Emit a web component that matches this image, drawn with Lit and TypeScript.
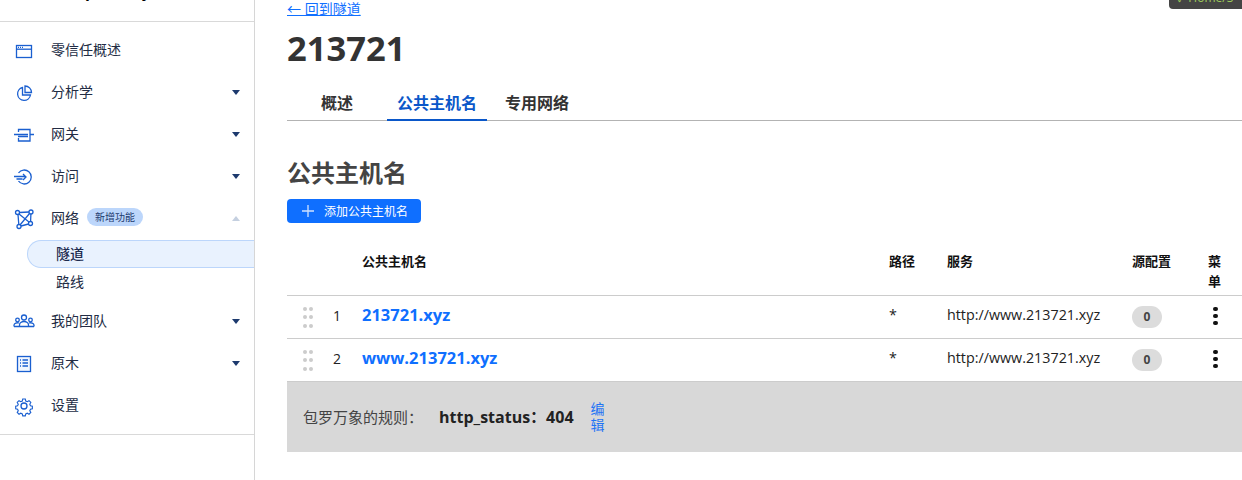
import { LitElement, html, css, svg } from "lit";
import { customElement } from "lit/decorators.js";

const ic = (b: unknown) => html`<svg class="ico" viewBox="0 0 24 24" width="24" height="24" fill="none" stroke="#1a5fd0" stroke-width="1.300">${b}</svg>`;
const icons: Record<string, unknown> = {
  win: ic(svg`<rect x="4.500" y="6.500" width="15" height="12"/><path d="M4.500 10.200h15"/><path d="M6 8.300h1M8 8.300h1M10 8.300h1"/>`),
  pie: ic(svg`<path d="M10.500 6.500a6.500 6.500 0 1 0 8 7.500h-8z"/><path d="M13 5a6.500 6.500 0 0 1 6.500 6.500H13z"/>`),
  gate: ic(svg`<path d="M6.500 9V6.500h11.500v11.500H6.500V15"/><path d="M2 11.500h14M6 13.500h10M18 11.500h4"/>`),
  access: ic(svg`<path d="M6.500 8a7 7 0 1 1 0 8"/><path d="M2 11.500h11M11 9l3 3-3 3M4.500 14h6"/>`),
  net: ic(svg`<circle cx="5.500" cy="5.500" r="2"/><circle cx="19" cy="5" r="2"/><circle cx="7" cy="19.500" r="2"/><circle cx="18.500" cy="16.500" r="2"/><path d="M7.500 5.500l9.500-.5M6 7.500l.8 10M18.900 7l-.3 7.500M9 19l7.600-2M7 7l10 8M17.500 6.500L8 18"/>`),
  team: ic(svg`<circle cx="12" cy="7.500" r="2.500"/><circle cx="5.500" cy="10" r="1.800"/><circle cx="18.500" cy="10" r="1.800"/><path d="M7.500 16.500v-1.500a4.500 3.500 0 0 1 9 0v1.500zM2 16.500v-1.500a3.500 2.500 0 0 1 5-2M22 16.500v-1.500a3.500 2.500 0 0 0-5-2M2 16.500h20"/>`),
  log: ic(svg`<rect x="5.500" y="4.500" width="13" height="15" fill="#f1f6fe"/><path d="M8 8h1M8 11h1M8 14h1M10.500 8h5.500M10.500 11h5.500M10.500 14h5.500"/>`),
  gear: ic(svg`<circle cx="12" cy="12" r="3"/><path d="M10.500 4.200h3l.5 2.300 1.800.8 2-1.200 2.100 2.100-1.200 2 .8 1.800 2.200.5v3l-2.200.5-.8 1.800 1.200 2-2.100 2.100-2-1.200-1.800.8-.5 2.300h-3l-.5-2.300-1.800-.8-2 1.200-2.100-2.100 1.200-2-.8-1.800-2.200-.5v-3l2.200-.5.8-1.800-1.200-2 2.100-2.100 2 1.200 1.800-.8z" transform="translate(1.700 1.400) scale(.86)"/>`),
};

@customElement("app-root")
export class AppRoot extends LitElement {
  static styles = css`
    :host { display: block; width: 1242px; height: 480px; overflow: hidden; position: relative; background: #fff;
      font-family: "Open Sans", "Noto Sans CJK SC", sans-serif; color: #222; }
    * { box-sizing: border-box; }
    .page { display: flex; height: 480px; }
    .side { width: 255px; flex: none; border-right: 1px solid #d6d6d6; }
    .brand { height: 22px; border-bottom: 1px solid #d9d9d9; overflow: hidden; padding-left: 43px; }
    .brand span { display: block; font-size: 16px; font-weight: 700; line-height: 20px; letter-spacing: 2.500px; color: #000; margin-top: -19px; white-space: nowrap; }
    .nav { padding-top: 6px; padding-bottom: 9px; border-bottom: 1px solid #d9d9d9; }
    .item { height: 42px; display: flex; align-items: center; padding-left: 12px; font-size: 14px; color: #222c44; position: relative; }
    .ico { flex: none; margin-right: 15px; margin-top: 4px; }
    .badge { margin-left: 8px; background: #bcd6fb; color: #1d3a6e; font-size: 10px; line-height: 18px; height: 18px; padding: 0 8px; border-radius: 9px; }
    .caret { position: absolute; left: 232px; top: 20px; width: 0; height: 0; border-left: 4px solid transparent; border-right: 4px solid transparent; border-top: 5px solid #1d3a6e; }
    .caret.up { border-top: 0; border-bottom: 5px solid #c5d0e0; }
    .subs { margin-top: 2px; margin-bottom: 3px; }
    .sub { height: 28px; display: flex; align-items: center; margin-left: 27px; padding-left: 29px; padding-bottom: 2px; font-size: 14px; color: #222c44; }
    .sub.on { background: #e9f2fe; border: 1px solid #bcd6fb; border-right: 0; border-radius: 14px 0 0 14px; padding-left: 28px; font-weight: 500; color: #1d2b4f; }
    .main { flex: 1; min-width: 0; padding-left: 32px; }
    .back { display: block; font-size: 14px; line-height: 18px; height: 18px; color: #0f6fff; text-decoration: underline; }
    h1 { margin: 8px 0 0; font-size: 34.500px; line-height: 44px; font-weight: 700; color: #333; }
    .tabs { display: flex; margin-top: 19px; border-bottom: 1px solid #b3b3b3; height: 32px; }
    .tab { width: 100px; height: 32px; text-align: center; font-size: 16px; line-height: 28px; font-weight: 700; color: #333; }
    .tab.on { color: #0a57c9; border-bottom: 2px solid #0a57c9; }
    h2 { margin: 33px 0 0; font-size: 24px; line-height: 38px; font-weight: 700; color: #444; }
    .add { display: flex; align-items: center; margin-top: 7px; width: 134px; height: 24px; background: #0f6fff; color: #fff; border-radius: 4px; font-size: 12px; padding-left: 15px; }
    .add svg { margin-right: 10px; }
    .row { display: grid; grid-template-columns: 75px 527px 58px 185px 76px 34px; }
    .head { height: 73px; border-bottom: 1px solid #ccc; font-size: 13px; font-weight: 700; line-height: 20px; padding-top: 28px; color: #111; }
    .narrow { width: 16px; }
    .body { height: 43px; border-bottom: 1px solid #ccc; align-items: center; font-size: 14.300px; color: #222; }
    .body.last { height: 42px; border-bottom: 0; }
    .up { margin-bottom: 5px; }
    .hn { display: flex; align-items: center; }
    .dots { display: grid; grid-template-columns: 4px 4px; gap: 4.500px 2px; margin-left: 16px; width: 30px; flex: none; }
    .dots i { width: 4px; height: 4px; border-radius: 50%; background: #ccc; }
    .num { font-size: 14px; margin-bottom: 4px; }
    .link { font-size: 16.500px; font-weight: 700; color: #0f6fff; }
    .pill { display: block; width: 30px; height: 22px; line-height: 22px; text-align: center; border-radius: 11px; background: #dcdcdc; font-size: 12px; font-weight: 700; color: #444; }
    .menu { display: flex; flex-direction: column; gap: 2.500px; margin-left: 5px; margin-bottom: 2px; }
    .menu i { width: 4.500px; height: 4.500px; border-radius: 50%; background: #111; }
    .foot { height: 71px; background: #d8d8d8; border-top: 1px solid #ccc; display: flex; align-items: center; padding-left: 16px; font-size: 15px; color: #444; }
    .foot span, .foot b { margin-bottom: 2px; }
    .foot b { margin-left: 16px; font-size: 16px; font-weight: 700; color: #222; }
    .foot a { margin-left: 17px; width: 14px; font-size: 14px; line-height: 16px; color: #1f74f5; }
    .toast { position: absolute; left: 1169px; top: 0; width: 73px; height: 9px; background: #444; border-bottom-left-radius: 4px; overflow: hidden; color: #9ccb5a; font-size: 12px; line-height: 12px; padding-left: 8px; white-space: nowrap; }
    .toast span { display: block; margin-top: -8px; }
  `;

  private navItem(icon: string, label: string, caret = true) {
    return html`<div class="item">${icons[icon]}${label}${caret ? html`<span class="caret"></span>` : ""}</div>`;
  }

  private row(n: number, host: string, last = false) {
    return html`<div class="row body ${last ? "last" : ""}">
      <div class="hn"><span class="dots">${[0, 1, 2, 3, 4, 5].map(() => html`<i></i>`)}</span><span class="num">${n}</span></div>
      <div class="link up">${host}</div>
      <div class="up">*</div>
      <div class="up">http://www.213721.xyz</div>
      <div><span class="pill">0</span></div>
      <div class="menu"><i></i><i></i><i></i></div>
    </div>`;
  }

  render() {
    return html`<div class="page">
      <aside class="side">
        <div class="brand"><span>Temporary</span></div>
        <nav class="nav">
          ${this.navItem("win", "零信任概述", false)}
          ${this.navItem("pie", "分析学")}
          ${this.navItem("gate", "网关")}
          ${this.navItem("access", "访问")}
          <div class="item">${icons.net}网络<span class="badge">新增功能</span><span class="caret up"></span></div>
          <div class="subs"><div class="sub on">隧道</div><div class="sub">路线</div></div>
          ${this.navItem("team", "我的团队")}
          ${this.navItem("log", "原木")}
          ${this.navItem("gear", "设置", false)}
        </nav>
      </aside>
      <main class="main">
        <a class="back">← 回到隧道</a>
        <h1>213721</h1>
        <div class="tabs"><div class="tab">概述</div><div class="tab on">公共主机名</div><div class="tab">专用网络</div></div>
        <h2>公共主机名</h2>
        <div class="add"><svg width="12" height="12" viewBox="0 0 12 12" stroke="#cfe2ff" stroke-width="1.300"><path d="M6 0v12M0 6h12"/></svg>添加公共主机名</div>
        <div class="row head"><div></div><div>公共主机名</div><div>路径</div><div>服务</div><div>源配置</div><div class="narrow">菜单</div></div>
        ${this.row(1, "213721.xyz")}
        ${this.row(2, "www.213721.xyz", true)}
        <div class="foot"><span>包罗万象的规则：</span><b>http_status：404</b><a>编辑</a></div>
      </main>
    </div>
    <div class="toast"><span>✓ Home/S</span></div>`;
  }
}
